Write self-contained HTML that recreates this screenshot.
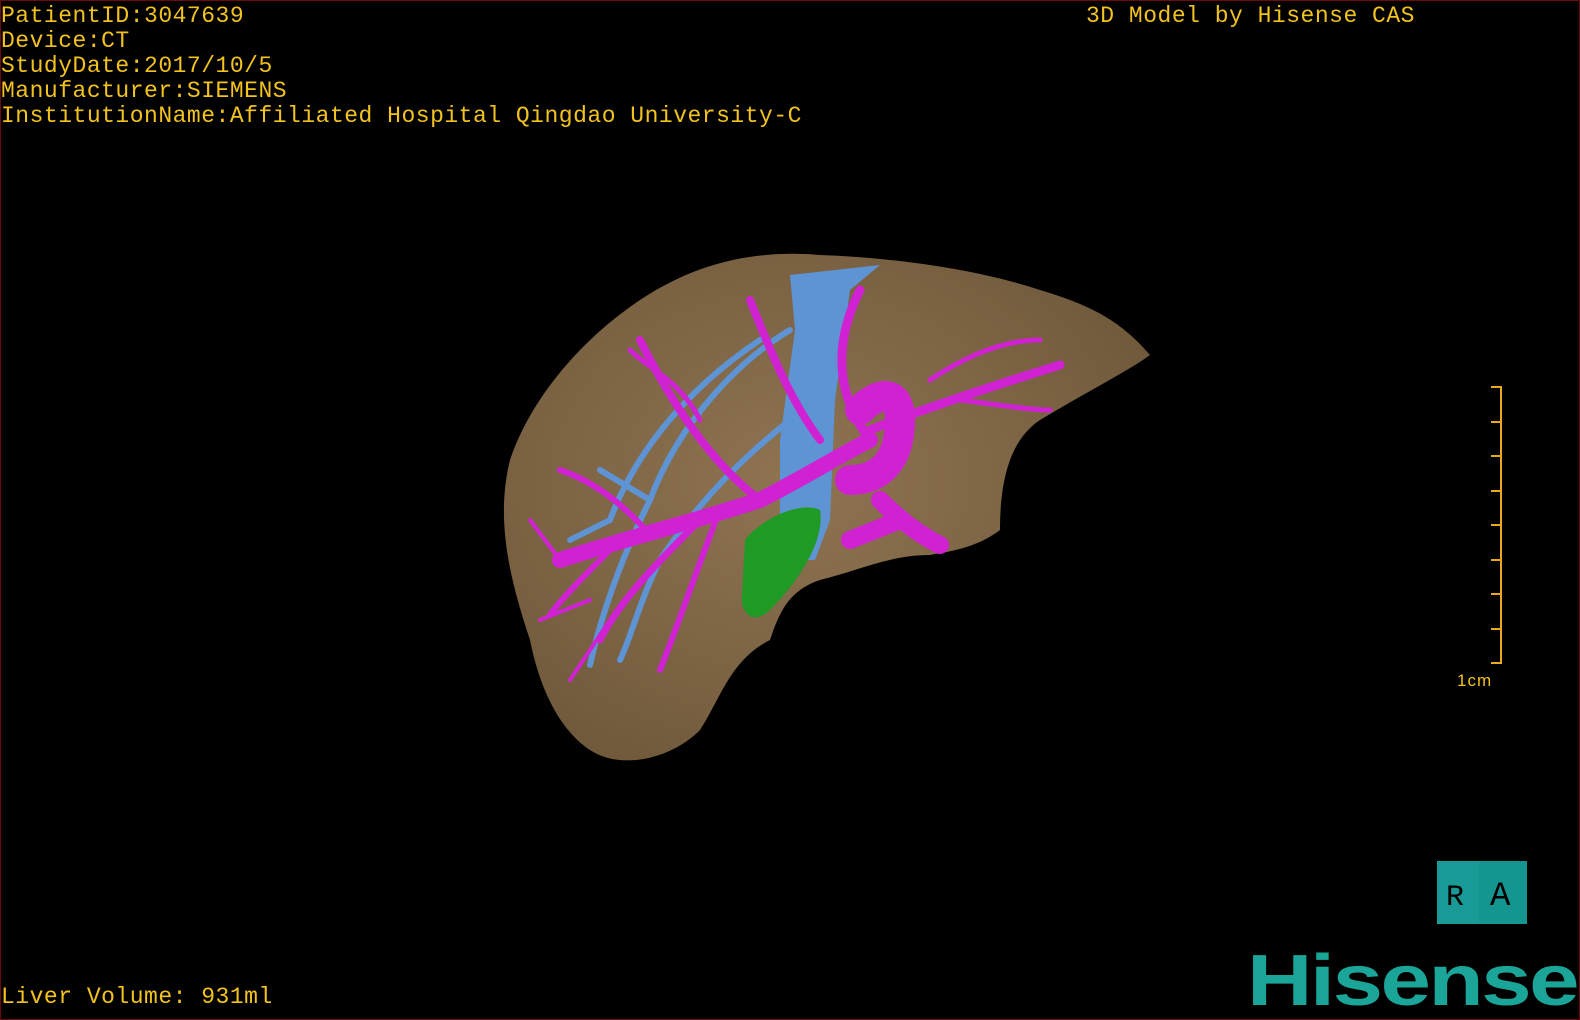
<!DOCTYPE html>
<html><head><meta charset="utf-8"><style>
html,body{margin:0;padding:0;background:#000;}
body{width:1580px;height:1020px;position:relative;overflow:hidden;}
.frame{position:absolute;left:0;top:0;width:1578px;height:1018px;border:1px solid #6a0a0a;}
.t{position:absolute;color:#f2c21e;font-family:"Liberation Mono",monospace;font-size:23px;line-height:25px;white-space:pre;letter-spacing:0.5px;}
</style></head><body>
<div class="frame"></div>
<div class="t" style="left:1px;top:4px">PatientID:3047639
Device:CT
StudyDate:2017/10/5
Manufacturer:SIEMENS
InstitutionName:Affiliated Hospital Qingdao University-C</div>
<div class="t" style="left:1086px;top:4px">3D Model by Hisense CAS</div>
<div class="t" style="left:1px;top:985px">Liver Volume: 931ml</div>
<svg width="1580" height="1020" style="position:absolute;left:0;top:0">
<defs><radialGradient id="lg" cx="0.45" cy="0.45" r="0.6"><stop offset="0" stop-color="#8f7452"/><stop offset="1" stop-color="#715a3c"/></radialGradient></defs>
<path d="M640 300 C700 260 760 250 820 255 C900 258 980 270 1040 290 C1090 305 1120 320 1150 355 C1130 370 1090 390 1040 420 C1010 440 1000 480 1000 530 C980 545 960 550 930 555 C890 555 860 570 820 580 C790 590 780 610 770 640 C730 660 720 700 700 730 C670 760 620 770 590 750 C560 730 540 690 530 640 C510 580 495 520 510 460 C530 400 580 340 640 300 Z" fill="url(#lg)"/>
<path d="M790 275 L880 265 L850 290 L835 400 L830 520 L815 560 L780 560 L780 440 L795 330 Z" fill="#5e93d4"/>
<g stroke="#5e93d4" stroke-width="6" fill="none" stroke-linecap="round">
<path d="M790 330 C740 360 680 420 650 500 C620 560 600 620 590 665"/>
<path d="M760 340 C700 380 640 440 610 520"/>
<path d="M790 420 C740 460 700 500 660 560 C640 600 630 640 620 660"/>
<path d="M650 500 L600 470"/><path d="M610 520 L570 540"/>
</g>
<path d="M745 540 C760 520 800 500 820 510 C825 540 800 580 770 610 C755 625 740 615 742 595 Z" fill="#1f9a25"/>
<g stroke="#d022d2" fill="none" stroke-linecap="round">
<path d="M560 560 C620 540 700 520 760 500 C800 480 840 455 870 440" stroke-width="16"/>
<path d="M860 410 C880 390 900 390 900 420 C900 460 880 480 850 480" stroke-width="30"/>
<path d="M870 430 C920 410 980 390 1060 365" stroke-width="9"/>
<path d="M880 500 C900 520 920 535 940 545 M850 540 L900 520" stroke-width="18"/>
<path d="M870 440 C840 400 830 350 860 290" stroke-width="9"/>
<path d="M820 440 C790 400 770 350 750 300" stroke-width="8"/>
<path d="M760 500 C720 470 680 420 640 340" stroke-width="8"/>
<path d="M700 520 C660 560 620 600 600 640" stroke-width="7"/>
<path d="M620 540 C590 570 560 600 550 615" stroke-width="6"/>
<path d="M650 535 C620 500 590 480 560 470" stroke-width="6"/>
<path d="M720 510 C700 560 680 620 660 670" stroke-width="6"/>
<path d="M700 420 C680 380 650 370 630 350" stroke-width="5"/>
<path d="M960 400 C1000 405 1030 410 1050 410" stroke-width="5"/>
<path d="M930 380 C960 360 1000 340 1040 340" stroke-width="5"/>
<path d="M560 560 L530 520 M590 600 L540 620 M610 620 L570 680" stroke-width="4"/>
</g>
<g stroke="#e8a820" stroke-width="2" fill="none">
<path d="M1491 387 H1501 V663 H1491"/>
<path d="M1491 422 H1501 M1491 456 H1501 M1491 491 H1501 M1491 525 H1501 M1491 560 H1501 M1491 594 H1501 M1491 629 H1501"/>
</g>
<text x="1457" y="686" fill="#f2c21e" font-family="Liberation Sans,sans-serif" font-size="17" letter-spacing="1">1cm</text>
<rect x="1437" y="861" width="42" height="63" fill="#1a9a96"/>
<rect x="1479" y="861" width="48" height="63" fill="#159590"/>
<text x="1446" y="905" font-family="Liberation Mono,monospace" font-size="30" fill="#000">R</text>
<text x="1490" y="905" font-family="Liberation Mono,monospace" font-size="34" fill="#000">A</text>
<text x="1247" y="1005" font-family="Liberation Sans,sans-serif" font-weight="bold" font-size="72" fill="#1aa598" letter-spacing="-2" textLength="330" lengthAdjust="spacingAndGlyphs">Hisense</text>
</svg>
</body></html>
